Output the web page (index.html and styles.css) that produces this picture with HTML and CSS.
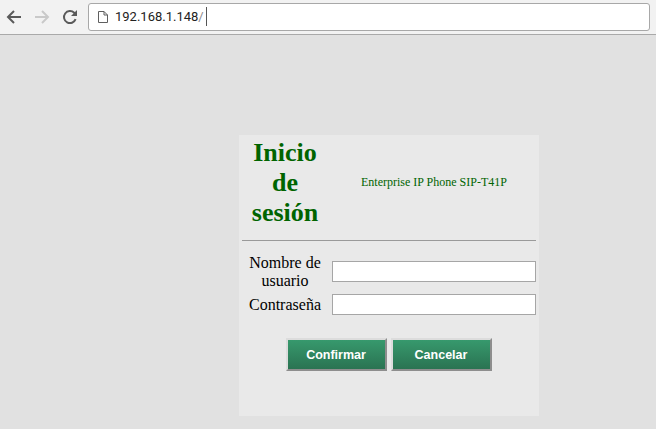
FILE: index.html
```
<!DOCTYPE html>
<html lang="es">
<head>
<meta charset="utf-8">
<title>Inicio de sesión</title>
<link rel="stylesheet" href="styles.css">
</head>
<body>
<header class="toolbar">
  <svg class="nav-icon" width="16" height="16" viewBox="0 0 16 16"><path d="M15 8H2.500M8 2L2 8l6 6" fill="none" stroke="#5a5a5a" stroke-width="2"/></svg>
  <svg class="nav-icon" width="16" height="16" viewBox="0 0 16 16"><path d="M1 8h12.500M8 2l6 6-6 6" fill="none" stroke="#c9c9c9" stroke-width="2"/></svg>
  <svg class="nav-icon" width="16" height="16" viewBox="0 0 16 16"><path d="M13.600 10.200A6 6 0 1 1 12.200 3.800L14 5.500" fill="none" stroke="#5a5a5a" stroke-width="2"/><path d="M15 1v6H9z" fill="#5a5a5a"/></svg>
  <div class="omnibox">
    <svg class="page-icon" width="10" height="12" viewBox="0 0 10 12"><path d="M.5.5h5.500l3.500 3.500v7.500H.5zM6 .5V4h3.500" fill="#fff" stroke="#5f5f5f"/></svg>
    <span class="host">192.168.1.148</span><span class="path">/</span><span class="caret"></span>
  </div>
</header>
<main class="stage">
  <form class="card">
    <div class="head">
      <h1 class="title">Inicio de sesión</h1>
      <p class="model">Enterprise IP Phone SIP-T41P</p>
    </div>
    <hr class="rule">
    <div class="fields">
      <label class="label" for="user">Nombre de usuario</label>
      <input class="input" id="user" type="text">
      <label class="label" for="pass">Contraseña</label>
      <input class="input" id="pass" type="password">
    </div>
    <div class="actions">
      <button class="btn" type="button">Confirmar</button>
      <button class="btn" type="button">Cancelar</button>
    </div>
  </form>
</main>
</body>
</html>
```
FILE: styles.css
```
* { box-sizing: border-box; }
html, body { margin: 0; height: 100%; overflow: hidden; }
body { background: #e1e1e1; font-family: "Liberation Serif", serif; }

.toolbar {
  height: 35px;
  background: #f2f2f2;
  border-bottom: 1px solid #a9a9a9;
  display: flex;
  align-items: center;
  padding: 0 2px 1px 6px;
  gap: 12px;
}
.nav-icon { flex: none; }
.omnibox {
  flex: 1;
  margin-left: -2px;
  height: 28px;
  background: #fff;
  border: 1px solid #a8a8a8;
  border-radius: 3px;
  display: flex;
  align-items: center;
  padding-left: 9px;
  font: 13px "Roboto", "Liberation Sans", sans-serif;
  margin-right: 4px;
}
.page-icon { margin-right: 7px; }
.host { color: #222; }
.path { color: #8a8a8a; }
.caret { width: 1px; height: 19px; margin-left: 2px; background: #555; }

.stage { padding: 100px 0 0 239px; }
.card {
  width: 300px;
  height: 281px;
  background: #e9e9e9;
  padding: 3px 3px 0;
}
.head { display: flex; align-items: center; height: 90px; }
.title {
  width: 86px;
  margin: 0;
  text-align: center;
  color: #006400;
  font-size: 26px;
  font-weight: bold;
  line-height: 30px;
}
.model {
  flex: 1;
  margin: -2px 0 0 33px;
  color: #006400;
  font-size: 12px;
}
.rule {
  margin: 12px 0 0;
  border: 0;
  border-top: 1px solid #9a9a9a;
}
.fields {
  margin-top: 13px;
  width: 294px;
  display: grid;
  grid-template-columns: 86px 204px;
  column-gap: 4px;
  align-items: center;
  row-gap: 4px;
}
.label {
  color: #000;
  font-size: 16px;
  line-height: 18px;
  text-align: center;
}
.input {
  height: 21px;
  width: 204px;
  background: #fff;
  border: 1px solid #a6a6a6;
  margin: 0 0 1px;
}
.actions {
  margin-top: 22px;
  display: flex;
  justify-content: center;
  gap: 4px;
  padding-right: 1px;
}
.btn {
  width: 101px;
  height: 33px;
  padding: 0;
  border: 2px solid;
  border-color: #dcdcdc #8e8e8e #8e8e8e #dcdcdc;
  background: linear-gradient(#37996d, #2a7352);
  color: #fff;
  font: bold 12.5px "Liberation Sans", sans-serif;
}
```
